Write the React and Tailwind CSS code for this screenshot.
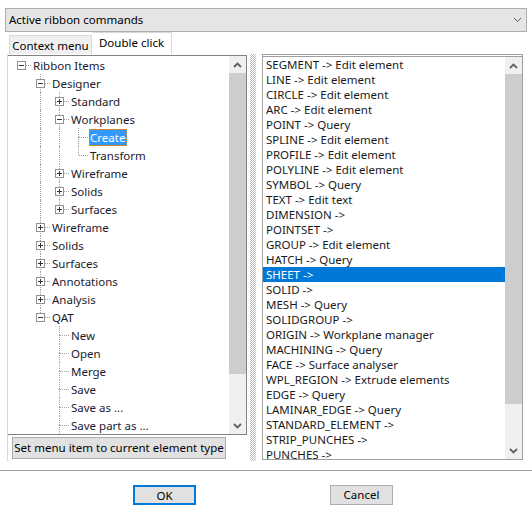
import React from "react";

const tree = [
  {
    label: "Ribbon Items",
    open: true,
    children: [
      {
        label: "Designer",
        open: true,
        children: [
          { label: "Standard", closed: true },
          {
            label: "Workplanes",
            open: true,
            children: [{ label: "Create", selected: true }, { label: "Transform" }],
          },
          { label: "Wireframe", closed: true },
          { label: "Solids", closed: true },
          { label: "Surfaces", closed: true },
        ],
      },
      { label: "Wireframe", closed: true },
      { label: "Solids", closed: true },
      { label: "Surfaces", closed: true },
      { label: "Annotations", closed: true },
      { label: "Analysis", closed: true },
      {
        label: "QAT",
        open: true,
        children: [
          { label: "New" },
          { label: "Open" },
          { label: "Merge" },
          { label: "Save" },
          { label: "Save as ..." },
          { label: "Save part as ...", more: true },
        ],
      },
    ],
  },
];

const commands = [
  "SEGMENT -> Edit element",
  "LINE -> Edit element",
  "CIRCLE -> Edit element",
  "ARC -> Edit element",
  "POINT -> Query",
  "SPLINE -> Edit element",
  "PROFILE -> Edit element",
  "POLYLINE -> Edit element",
  "SYMBOL -> Query",
  "TEXT -> Edit text",
  "DIMENSION ->",
  "POINTSET ->",
  "GROUP -> Edit element",
  "HATCH -> Query",
  "SHEET ->",
  "SOLID ->",
  "MESH -> Query",
  "SOLIDGROUP ->",
  "ORIGIN -> Workplane manager",
  "MACHINING -> Query",
  "FACE -> Surface analyser",
  "WPL_REGION -> Extrude elements",
  "EDGE -> Query",
  "LAMINAR_EDGE -> Query",
  "STANDARD_ELEMENT ->",
  "STRIP_PUNCHES ->",
  "PUNCHES ->",
];

// flatten the tree into rows with guide-line info
const flatten = (nodes, depth = 0, guides = []) => {
  const rows = [];
  nodes.forEach((n, i) => {
    const hasNext = i < nodes.length - 1 || !!n.more;
    rows.push({ ...n, depth, guides, hasNext });
    if (n.open && n.children) {
      rows.push(...flatten(n.children, depth + 1, [...guides, hasNext]));
    }
  });
  return rows;
};

const Chevron = ({ up, thin }) => (
  <svg width="9" height="6" viewBox="0 0 9 6">
    <polyline
      points={up ? "1,5 4.5,1.5 8,5" : "1,1 4.5,4.5 8,1"}
      fill="none"
      stroke={thin ? "#555" : "#606060"}
      strokeWidth={thin ? 1 : 1.8}
    />
  </svg>
);

const ScrollBar = ({ thumbH }) => (
  <div className="flex h-full w-[17px] flex-col bg-[#f0f0f0]">
    <div className="flex h-[17px] items-center justify-center">
      <Chevron up />
    </div>
    <div className="flex-1">
      <div className="bg-[#cdcdcd]" style={{ height: thumbH }} />
    </div>
    <div className="flex h-[17px] items-center justify-center">
      <Chevron />
    </div>
  </div>
);

const ExpandBox = ({ open }) => (
  <div className="absolute left-[5px] top-[5px] h-[9px] w-[9px] border border-[#919191] bg-white">
    <div className="absolute left-[1px] top-[3px] h-[1px] w-[5px] bg-[#333]" />
    {!open && <div className="absolute left-[3px] top-[1px] h-[5px] w-[1px] bg-[#333]" />}
  </div>
);

const TreeRow = ({ row }) => {
  const cols = Array.from({ length: row.depth + 1 }, (_, c) => c);
  const hasBox = row.open || row.closed;
  return (
    <div className="flex h-[18px] items-center whitespace-nowrap">
      {cols.map((c) => (
        <div key={c} className="relative h-full w-[19px] shrink-0">
          {c < row.depth && c >= 1 && row.guides[c] && (
            <div className="absolute left-[9px] top-0 h-full border-l border-dotted border-[#a0a0a0]" />
          )}
          {c === row.depth && (
            <>
              {row.depth >= 1 && (
                <div className="absolute left-[9px] top-0 h-[9px] border-l border-dotted border-[#a0a0a0]" />
              )}
              {row.depth >= 1 && row.hasNext && (
                <div className="absolute left-[9px] top-[9px] h-[9px] border-l border-dotted border-[#a0a0a0]" />
              )}
              <div className="absolute left-[10px] top-[9px] w-[9px] border-t border-dotted border-[#a0a0a0]" />
              {hasBox && <ExpandBox open={row.open} />}
            </>
          )}
        </div>
      ))}
      <span
        className={
          row.selected
            ? "ml-[1px] border border-dotted border-[#d9902a] bg-[#3399ff] pr-[1px] leading-[15px] text-white"
            : "ml-[1px] border border-transparent pr-[1px] leading-[15px] text-[#1a1a2e]"
        }
      >
        {row.label}
      </span>
    </div>
  );
};

export default function App() {
  const rows = flatten(tree);

  return (
    <div className="flex h-[508px] w-[532px] flex-col overflow-hidden bg-white pt-[8px] font-['Noto_Sans',sans-serif] text-[11.5px] text-black">
      {/* Combo box */}
      <div className="mx-[5px] flex h-[24px] shrink-0 items-center justify-between border border-[#adadad] bg-[#e5e5e5] pl-[3px] pr-[4px]">
        <span>Active ribbon commands</span>
        <Chevron thin />
      </div>

      {/* Tabs */}
      <div className="flex h-[22px] shrink-0 items-end pl-[9px]">
        <div className="flex h-[19px] w-[83px] items-center justify-center border border-b-0 border-[#d9d9d9] bg-[#f0f0f0] pt-[1px]">
          Context menu
        </div>
        <div className="flex h-[22px] w-[80px] items-start justify-center border border-b-0 border-l-0 border-[#d9d9d9] bg-white pt-[1px]">
          Double click
        </div>
      </div>

      {/* Panels */}
      <div className="flex h-[407px] shrink-0">
        <div className="ml-[7px] flex w-[240px] flex-col border-l border-[#d9d9d9]">
          <div className="mt-[1px] flex h-[380px] border border-l-0 border-[#828282]">
            <div className="flex-1 overflow-hidden pl-[4px]">
              {rows.map((r, i) => (
                <TreeRow key={i} row={r} />
              ))}
            </div>
            <ScrollBar thumbH={301} />
          </div>
          <button className="ml-[4px] mt-[2px] flex h-[22px] w-[214px] items-center justify-center whitespace-nowrap border border-[#adadad] bg-[#e1e1e1]">
            Set menu item to current element type
          </button>
        </div>

        <div className="ml-[3px] h-full w-[6px] bg-[repeating-conic-gradient(#bdbdbd_0_25%,transparent_0_50%)] bg-[length:2px_2px]" />

        <div className="ml-[6px] flex h-[406px] w-[261px] border border-t-[3px] border-double border-[#a0a0a0]">
          <div className="flex-1 overflow-hidden">
            {commands.map((c) => (
              <div
                key={c}
                className={
                  c === "SHEET ->"
                    ? "h-[15px] whitespace-nowrap bg-[#0078d7] pl-[3px] leading-[15px] text-white"
                    : "h-[15px] whitespace-nowrap pl-[3px] leading-[15px] text-[#1a1a1a]"
                }
              >
                {c}
              </div>
            ))}
          </div>
          <ScrollBar thumbH={330} />
        </div>
      </div>

      {/* Separator */}
      <div className="mt-[9px] shrink-0 border-t border-[#a0a0a0]" />

      {/* Buttons */}
      <div className="mt-[14px] flex shrink-0">
        <button className="ml-[133px] h-[20px] w-[63px] border-2 border-[#0078d7] bg-[#e1e1e1]">
          OK
        </button>
        <button className="ml-[134px] h-[20px] w-[63px] border border-[#adadad] bg-[#e1e1e1]">
          Cancel
        </button>
      </div>
    </div>
  );
}
